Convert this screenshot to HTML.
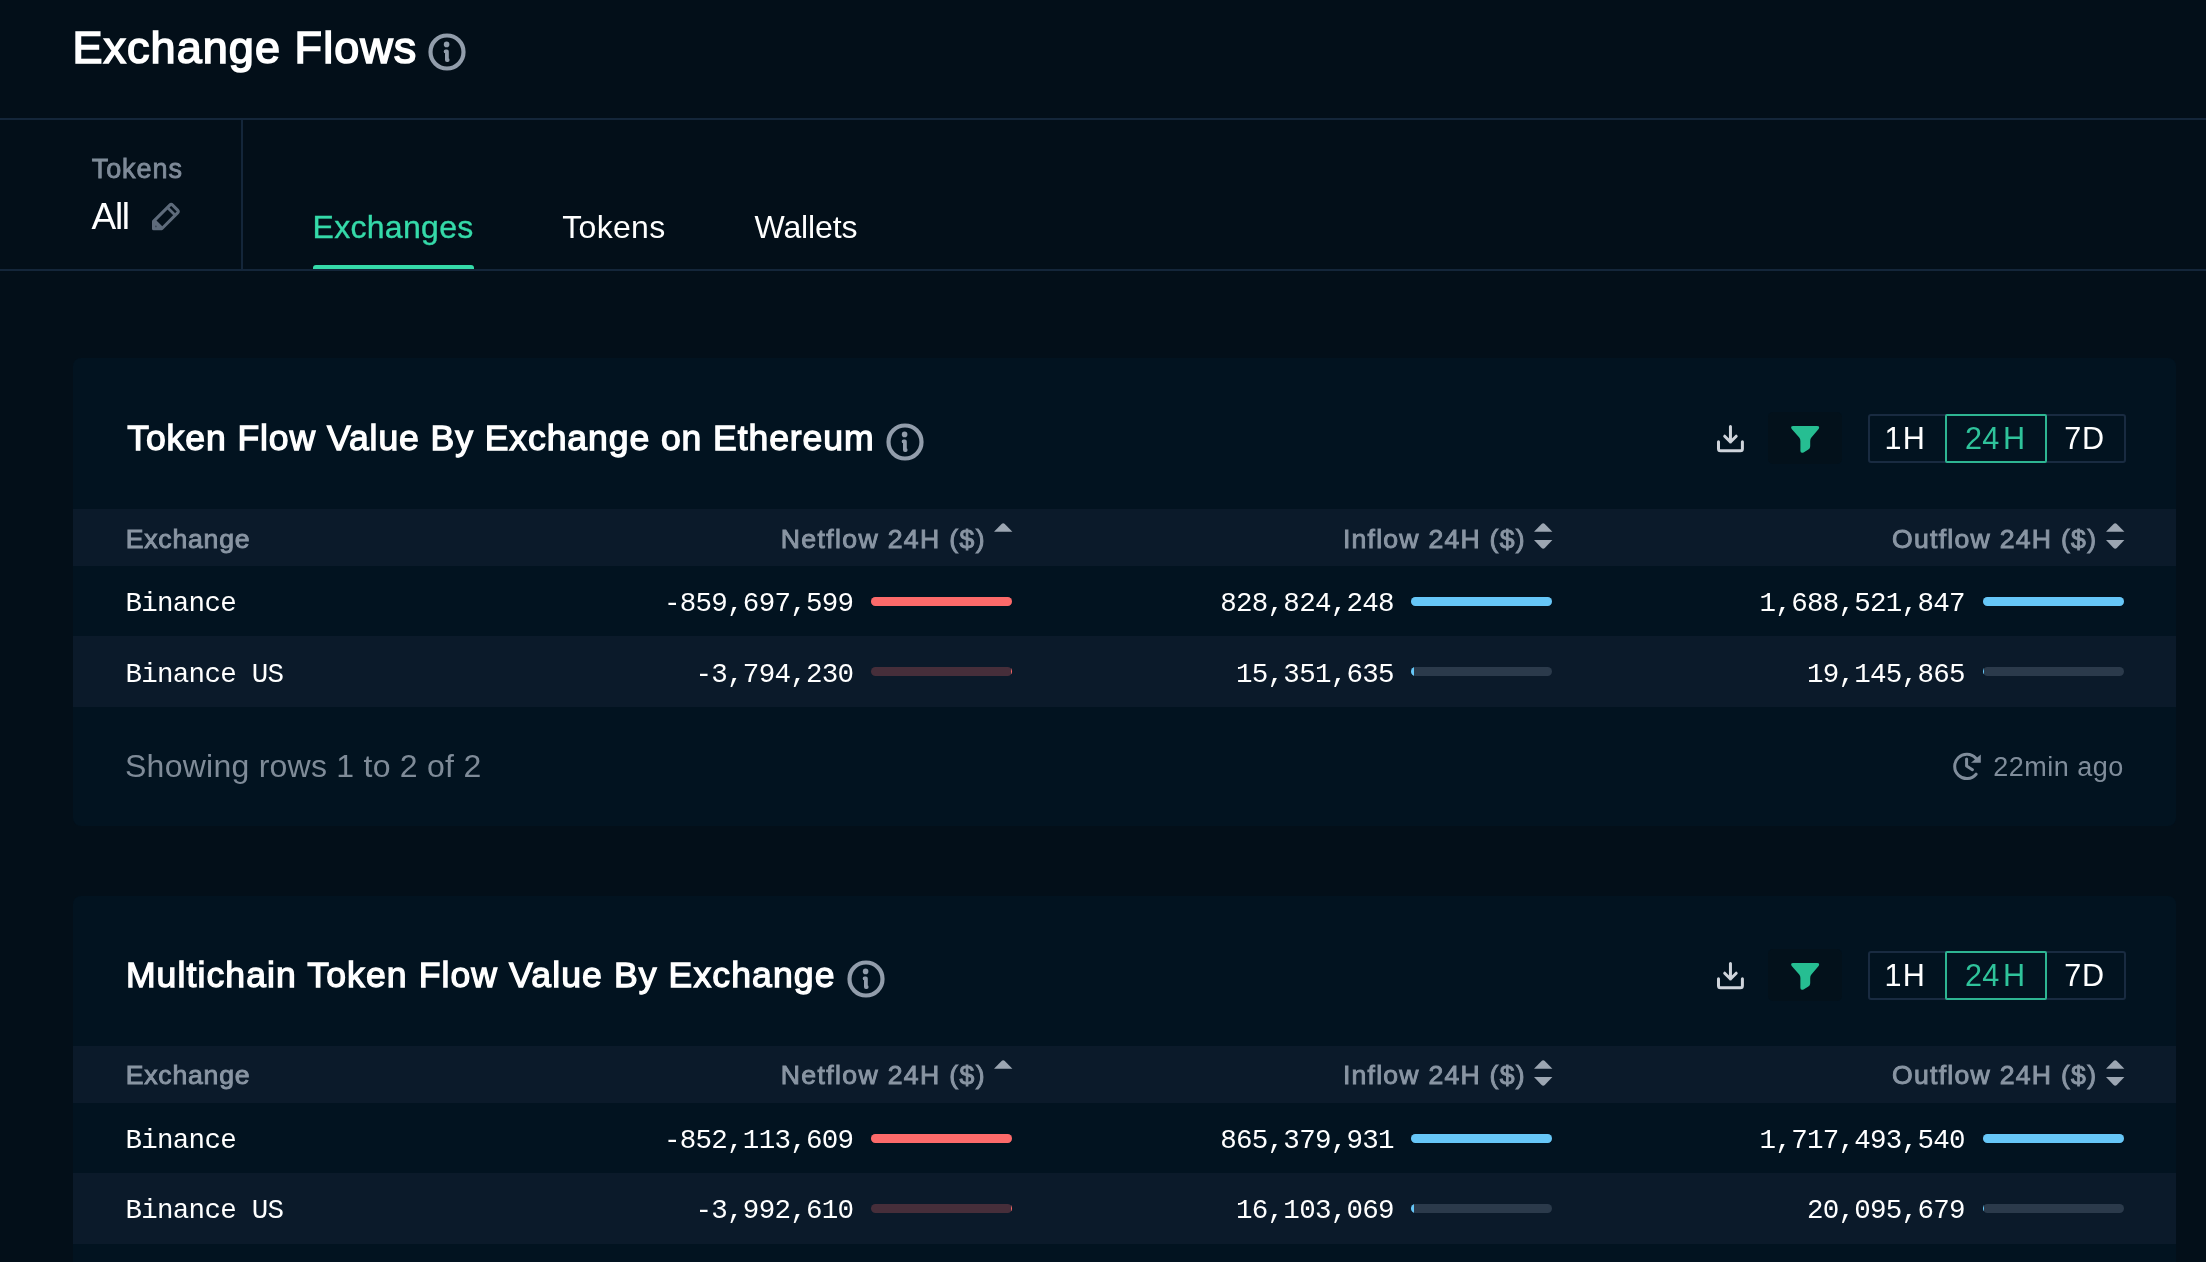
<!DOCTYPE html>
<html lang="en"><head><meta charset="utf-8"><title>Exchange Flows</title>
<style>
*{margin:0;padding:0;box-sizing:border-box}
html,body{width:2206px;height:1262px;overflow:hidden;background:#030f19}
body{position:relative;font-family:"Liberation Sans",sans-serif;color:#fff}
.t{position:absolute;line-height:1;white-space:pre;font-weight:400}
.m{font-family:"Liberation Mono",monospace}
.b{font-weight:400;-webkit-text-stroke:0.036em currentColor}
#root{position:absolute;left:0;top:0;width:2206px;height:1262px;overflow:hidden;will-change:transform;transform:translateZ(0)}
.b2{font-weight:400;-webkit-text-stroke:0.036em currentColor}
.b3{-webkit-text-stroke:0.012em currentColor}
.b4{-webkit-text-stroke:0.03em currentColor}
.abs{position:absolute}
.hl{position:absolute;background:#14263a}
.card{position:absolute;left:73px;width:2103px;background:#021320;border-radius:8px}
.band{position:absolute;left:73px;width:2103px;background:#0b1a2a}
.bar{position:absolute;height:9px;border-radius:5px;overflow:hidden}
.bar i{position:absolute;left:0;top:0;bottom:0;display:block}
svg{position:absolute;overflow:visible}
</style></head>
<body><div id="root">
<header class="page-head">
<h1 class="t b" style="top:22px;font-size:45px;line-height:51px;left:72.40px;letter-spacing:1.060px;">Exchange Flows</h1>
<svg style="left:427.3px;top:31.9px" width="40" height="40" viewBox="-20 -20 40 40"><circle r="16.5" fill="none" stroke="#929dab" stroke-width="4.2"/><circle cx="-0.4" cy="-7.6" r="2.8" fill="#929dab"/><path d="M-1.4 -0.6H-0.1V8H0.7" fill="none" stroke="#929dab" stroke-width="3.8" stroke-linecap="round" stroke-linejoin="round"/></svg>
</header>
<div class="hl" style="left:0;top:118px;width:2206px;height:2px"></div>
<div class="hl" style="left:0;top:269px;width:2206px;height:2px"></div>
<div class="hl" style="left:241px;top:120px;width:2px;height:149px"></div>
<div class="t b4" style="top:154px;font-size:27px;line-height:30px;left:91.70px;letter-spacing:0.950px;color:#7f8b99;">Tokens</div>
<div class="t" style="top:196px;font-size:37px;line-height:41px;left:91.50px;letter-spacing:-1.300px;">All</div>
<svg style="left:152px;top:201.5px" width="30" height="29" viewBox="0 0 30 29"><path d="M17.8 3.12Q19.2 1.72 20.6 3.12L25.58 8.1Q26.98 9.5 25.58 10.9L9.78 26.7H1.5V19.42Z" fill="none" stroke="#5e6b7b" stroke-width="3" stroke-linejoin="round"/><path d="M15.46 5.46L23.24 13.24" fill="none" stroke="#5e6b7b" stroke-width="2.8"/><path d="M1.5 19.42L3.46 17.46L11.24 25.24L9.78 26.7H1.5Z" fill="#5e6b7b"/><circle cx="3.9" cy="24.4" r="0.9" fill="#3a4656"/></svg>
<nav>
<div class="t b3" style="top:209px;font-size:32px;line-height:36px;left:312.50px;letter-spacing:0.300px;color:#35daa9;">Exchanges</div>
<div class="t" style="top:209px;font-size:32px;line-height:36px;left:562.30px;letter-spacing:0.300px;">Tokens</div>
<div class="t" style="top:209px;font-size:32px;line-height:36px;left:754.60px;letter-spacing:-0.150px;">Wallets</div>
<div class="abs" style="left:313px;top:265px;width:161px;height:4px;background:#35daa9;border-radius:3px 3px 0 0"></div>
</nav>
<section class="panel"><div class="card" style="top:358px;height:468px"></div>
<header class="panel-head">
<h2 class="t b" style="top:418px;font-size:35.6px;line-height:40px;left:127.20px;letter-spacing:0.900px;">Token Flow Value By Exchange on Ethereum</h2>
<svg style="left:885.3px;top:421.9px" width="40" height="40" viewBox="-20 -20 40 40"><circle r="16.5" fill="none" stroke="#929dab" stroke-width="4.2"/><circle cx="-0.4" cy="-7.6" r="2.8" fill="#929dab"/><path d="M-1.4 -0.6H-0.1V8H0.7" fill="none" stroke="#929dab" stroke-width="3.8" stroke-linecap="round" stroke-linejoin="round"/></svg>
<svg style="left:1717px;top:424.9px" width="27" height="28" viewBox="0 0 27 28"><g fill="none" stroke="#cfd4db" stroke-width="3" stroke-linecap="round" stroke-linejoin="round"><path d="M13.45 1.5V17M7.7 11.2L13.45 17L19.2 11.2"/><path d="M1.5 16.8V23.7Q1.5 25.7 3.5 25.7H23.4Q25.4 25.7 25.4 23.7V16.8"/></g></svg>
<div class="abs" style="left:1768px;top:412px;width:74px;height:52px;background:#03111b;border-radius:5px"></div>
<svg style="left:1791px;top:426px" width="29" height="28" viewBox="0 0 29 28"><path d="M2.2 0H26.1Q29.3 0.2 27.6 2.9L20.4 11.6Q19.2 13.1 19.2 15V20.2Q19.2 22.4 17.4 23.6L12.6 26.4Q9.4 27.8 9.4 24.8V15Q9.4 13.1 8.2 11.6L0.7 2.9Q-1 0.2 2.2 0Z" fill="#26be92"/></svg>
<div class="abs" style="left:1868px;top:414px;width:258px;height:49px;border:2px solid #192b41;border-radius:3px"></div>
<div class="abs" style="left:1945px;top:414px;width:102px;height:49px;border:2px solid #2eb592;border-radius:2px"></div>
<div class="t" style="top:421px;font-size:30.6px;line-height:34px;left:1884.60px;"><span style="letter-spacing:1.1px">1</span>H</div>
<div class="t" style="top:421px;font-size:30.6px;line-height:34px;left:1965.10px;color:#2fc39b;"><span style="letter-spacing:0.2px">2</span><span style="letter-spacing:3.6px">4</span>H</div>
<div class="t" style="top:421px;font-size:30.6px;line-height:34px;left:2064.20px;"><span style="letter-spacing:0.8px">7</span>D</div>
</header>
<div class="table" role="table"><div class="thead" role="row">
<div class="band" style="top:509px;height:57px"></div>
<div class="t b2" style="top:524px;font-size:26.6px;line-height:30px;left:125.70px;letter-spacing:0.790px;color:#8995a3;">Exchange</div>
<div class="t b2" style="top:524px;font-size:26.6px;line-height:30px;right:1220.10px;letter-spacing:1.360px;color:#8995a3;">Netflow 24H ($)</div>
<svg style="left:993.8px;top:522.8px" width="18.4" height="8.8" viewBox="0 0 18.4 8.8"><path d="M0 8.8L7.60 0.9Q9.20 -0.6 10.80 0.9L18.4 8.8Z" fill="#9ca6b2"/></svg>
<div class="t b2" style="top:524px;font-size:26.6px;line-height:30px;right:680.20px;letter-spacing:1.240px;color:#8995a3;">Inflow 24H ($)</div>
<svg style="left:1533.8px;top:522.8px" width="18.4" height="8.8" viewBox="0 0 18.4 8.8"><path d="M0 8.8L7.60 0.9Q9.20 -0.6 10.80 0.9L18.4 8.8Z" fill="#9ca6b2"/></svg>
<svg style="left:1533.8px;top:540px" width="18.4" height="9" viewBox="0 0 18.4 9"><path d="M0 0L7.60 8.10Q9.20 9.60 10.80 8.10L18.4 0Z" fill="#9ca6b2"/></svg>
<div class="t b2" style="top:524px;font-size:26.6px;line-height:30px;right:108.70px;letter-spacing:1.270px;color:#8995a3;">Outflow 24H ($)</div>
<svg style="left:2105.7px;top:522.8px" width="18.4" height="8.8" viewBox="0 0 18.4 8.8"><path d="M0 8.8L7.60 0.9Q9.20 -0.6 10.80 0.9L18.4 8.8Z" fill="#9ca6b2"/></svg>
<svg style="left:2105.7px;top:540px" width="18.4" height="9" viewBox="0 0 18.4 9"><path d="M0 0L7.60 8.10Q9.20 9.60 10.80 8.10L18.4 0Z" fill="#9ca6b2"/></svg>
</div>
<div class="tr" role="row">
<div class="t m" style="top:588px;font-size:27.5px;line-height:31px;left:125.50px;letter-spacing:-0.723px;">Binance</div>
<div class="t m" style="top:588px;font-size:27.5px;line-height:31px;right:1352.68px;letter-spacing:-0.723px;">-859,697,599</div>
<div class="bar" style="left:870.8px;top:597.0px;width:141.4px;background:#462e3a"><i style="left:auto;right:0;width:141.4px;background:#fc6a6a"></i></div>
<div class="t m" style="top:588px;font-size:27.5px;line-height:31px;right:812.18px;letter-spacing:-0.723px;">828,824,248</div>
<div class="bar" style="left:1410.8px;top:597.0px;width:141.4px;background:#2b3a4b"><i style="width:141.4px;background:#66c7f8"></i></div>
<div class="t m" style="top:588px;font-size:27.5px;line-height:31px;right:241.28px;letter-spacing:-0.723px;">1,688,521,847</div>
<div class="bar" style="left:1982.8px;top:597.0px;width:141.4px;background:#2b3a4b"><i style="width:141.4px;background:#66c7f8"></i></div>
</div>
<div class="tr" role="row">
<div class="band" style="top:636px;height:71px"></div>
<div class="t m" style="top:659px;font-size:27.5px;line-height:31px;left:125.50px;letter-spacing:-0.723px;">Binance US</div>
<div class="t m" style="top:659px;font-size:27.5px;line-height:31px;right:1352.68px;letter-spacing:-0.723px;">-3,794,230</div>
<div class="bar" style="left:870.8px;top:667.1px;width:141.4px;background:#462e3a"><i style="left:auto;right:0;width:1.7px;background:#fc6a6a"></i></div>
<div class="t m" style="top:659px;font-size:27.5px;line-height:31px;right:812.18px;letter-spacing:-0.723px;">15,351,635</div>
<div class="bar" style="left:1410.8px;top:667.1px;width:141.4px;background:#2b3a4b"><i style="width:3.4px;background:#66c7f8"></i></div>
<div class="t m" style="top:659px;font-size:27.5px;line-height:31px;right:241.28px;letter-spacing:-0.723px;">19,145,865</div>
<div class="bar" style="left:1982.8px;top:667.1px;width:141.4px;background:#2b3a4b"><i style="width:1.7px;background:#66c7f8"></i></div>
</div>
</div>
<footer class="panel-foot">
<div class="t" style="top:748px;font-size:32px;line-height:36px;left:125.00px;letter-spacing:0.250px;color:#7f8b98;">Showing rows 1 to 2 of 2</div>
<svg style="left:1951px;top:751px" width="32" height="30" viewBox="0 0 32 30"><g fill="none" stroke="#808d9b" stroke-width="3" stroke-linecap="round" stroke-linejoin="round"><path d="M24.79 7.3A12.1 12.1 0 1 0 25.07 23.18"/><path d="M15.6 7.9V15.1L21.4 18.7"/></g><path d="M23.8 10.3H28.4V6.4Z" fill="#808d9b" stroke="#808d9b" stroke-width="2.8" stroke-linejoin="miter"/></svg>
<div class="t" style="top:752px;font-size:27px;line-height:30px;left:1993.20px;letter-spacing:0.500px;color:#808d9b;">22min ago</div>
</footer></section>
<section class="panel"><div class="card" style="top:896px;height:400px"></div>
<header class="panel-head">
<h2 class="t b" style="top:955px;font-size:35.6px;line-height:40px;left:125.90px;letter-spacing:1.090px;">Multichain Token Flow Value By Exchange</h2>
<svg style="left:846.3px;top:958.7px" width="40" height="40" viewBox="-20 -20 40 40"><circle r="16.5" fill="none" stroke="#929dab" stroke-width="4.2"/><circle cx="-0.4" cy="-7.6" r="2.8" fill="#929dab"/><path d="M-1.4 -0.6H-0.1V8H0.7" fill="none" stroke="#929dab" stroke-width="3.8" stroke-linecap="round" stroke-linejoin="round"/></svg>
<svg style="left:1717px;top:961.9px" width="27" height="28" viewBox="0 0 27 28"><g fill="none" stroke="#cfd4db" stroke-width="3" stroke-linecap="round" stroke-linejoin="round"><path d="M13.45 1.5V17M7.7 11.2L13.45 17L19.2 11.2"/><path d="M1.5 16.8V23.7Q1.5 25.7 3.5 25.7H23.4Q25.4 25.7 25.4 23.7V16.8"/></g></svg>
<div class="abs" style="left:1768px;top:949px;width:74px;height:52px;background:#03111b;border-radius:5px"></div>
<svg style="left:1791px;top:963px" width="29" height="28" viewBox="0 0 29 28"><path d="M2.2 0H26.1Q29.3 0.2 27.6 2.9L20.4 11.6Q19.2 13.1 19.2 15V20.2Q19.2 22.4 17.4 23.6L12.6 26.4Q9.4 27.8 9.4 24.8V15Q9.4 13.1 8.2 11.6L0.7 2.9Q-1 0.2 2.2 0Z" fill="#26be92"/></svg>
<div class="abs" style="left:1868px;top:951px;width:258px;height:49px;border:2px solid #192b41;border-radius:3px"></div>
<div class="abs" style="left:1945px;top:951px;width:102px;height:49px;border:2px solid #2eb592;border-radius:2px"></div>
<div class="t" style="top:958px;font-size:30.6px;line-height:34px;left:1884.60px;"><span style="letter-spacing:1.1px">1</span>H</div>
<div class="t" style="top:958px;font-size:30.6px;line-height:34px;left:1965.10px;color:#2fc39b;"><span style="letter-spacing:0.2px">2</span><span style="letter-spacing:3.6px">4</span>H</div>
<div class="t" style="top:958px;font-size:30.6px;line-height:34px;left:2064.20px;"><span style="letter-spacing:0.8px">7</span>D</div>
</header>
<div class="table" role="table"><div class="thead" role="row">
<div class="band" style="top:1046px;height:57px"></div>
<div class="t b2" style="top:1060px;font-size:26.6px;line-height:30px;left:125.70px;letter-spacing:0.790px;color:#8995a3;">Exchange</div>
<div class="t b2" style="top:1060px;font-size:26.6px;line-height:30px;right:1220.10px;letter-spacing:1.360px;color:#8995a3;">Netflow 24H ($)</div>
<svg style="left:993.8px;top:1059.8px" width="18.4" height="8.8" viewBox="0 0 18.4 8.8"><path d="M0 8.8L7.60 0.9Q9.20 -0.6 10.80 0.9L18.4 8.8Z" fill="#9ca6b2"/></svg>
<div class="t b2" style="top:1060px;font-size:26.6px;line-height:30px;right:680.20px;letter-spacing:1.240px;color:#8995a3;">Inflow 24H ($)</div>
<svg style="left:1533.8px;top:1059.8px" width="18.4" height="8.8" viewBox="0 0 18.4 8.8"><path d="M0 8.8L7.60 0.9Q9.20 -0.6 10.80 0.9L18.4 8.8Z" fill="#9ca6b2"/></svg>
<svg style="left:1533.8px;top:1077px" width="18.4" height="9" viewBox="0 0 18.4 9"><path d="M0 0L7.60 8.10Q9.20 9.60 10.80 8.10L18.4 0Z" fill="#9ca6b2"/></svg>
<div class="t b2" style="top:1060px;font-size:26.6px;line-height:30px;right:108.70px;letter-spacing:1.270px;color:#8995a3;">Outflow 24H ($)</div>
<svg style="left:2105.7px;top:1059.8px" width="18.4" height="8.8" viewBox="0 0 18.4 8.8"><path d="M0 8.8L7.60 0.9Q9.20 -0.6 10.80 0.9L18.4 8.8Z" fill="#9ca6b2"/></svg>
<svg style="left:2105.7px;top:1077px" width="18.4" height="9" viewBox="0 0 18.4 9"><path d="M0 0L7.60 8.10Q9.20 9.60 10.80 8.10L18.4 0Z" fill="#9ca6b2"/></svg>
</div>
<div class="tr" role="row">
<div class="t m" style="top:1125px;font-size:27.5px;line-height:31px;left:125.50px;letter-spacing:-0.723px;">Binance</div>
<div class="t m" style="top:1125px;font-size:27.5px;line-height:31px;right:1352.68px;letter-spacing:-0.723px;">-852,113,609</div>
<div class="bar" style="left:870.8px;top:1133.5px;width:141.4px;background:#462e3a"><i style="left:auto;right:0;width:141.4px;background:#fc6a6a"></i></div>
<div class="t m" style="top:1125px;font-size:27.5px;line-height:31px;right:812.18px;letter-spacing:-0.723px;">865,379,931</div>
<div class="bar" style="left:1410.8px;top:1133.5px;width:141.4px;background:#2b3a4b"><i style="width:141.4px;background:#66c7f8"></i></div>
<div class="t m" style="top:1125px;font-size:27.5px;line-height:31px;right:241.28px;letter-spacing:-0.723px;">1,717,493,540</div>
<div class="bar" style="left:1982.8px;top:1133.5px;width:141.4px;background:#2b3a4b"><i style="width:141.4px;background:#66c7f8"></i></div>
</div>
<div class="tr" role="row">
<div class="band" style="top:1172.5px;height:71.0px"></div>
<div class="t m" style="top:1195px;font-size:27.5px;line-height:31px;left:125.50px;letter-spacing:-0.723px;">Binance US</div>
<div class="t m" style="top:1195px;font-size:27.5px;line-height:31px;right:1352.68px;letter-spacing:-0.723px;">-3,992,610</div>
<div class="bar" style="left:870.8px;top:1204.0px;width:141.4px;background:#462e3a"><i style="left:auto;right:0;width:1.7px;background:#fc6a6a"></i></div>
<div class="t m" style="top:1195px;font-size:27.5px;line-height:31px;right:812.18px;letter-spacing:-0.723px;">16,103,069</div>
<div class="bar" style="left:1410.8px;top:1204.0px;width:141.4px;background:#2b3a4b"><i style="width:3.4px;background:#66c7f8"></i></div>
<div class="t m" style="top:1195px;font-size:27.5px;line-height:31px;right:241.28px;letter-spacing:-0.723px;">20,095,679</div>
<div class="bar" style="left:1982.8px;top:1204.0px;width:141.4px;background:#2b3a4b"><i style="width:1.7px;background:#66c7f8"></i></div>
</div>
</div>
<footer class="panel-foot">
<div class="t" style="top:1285px;font-size:32px;line-height:36px;left:125.00px;letter-spacing:0.250px;color:#7f8b98;">Showing rows 1 to 2 of 2</div>
<svg style="left:1951px;top:1288px" width="32" height="30" viewBox="0 0 32 30"><g fill="none" stroke="#808d9b" stroke-width="3" stroke-linecap="round" stroke-linejoin="round"><path d="M24.79 7.3A12.1 12.1 0 1 0 25.07 23.18"/><path d="M15.6 7.9V15.1L21.4 18.7"/></g><path d="M23.8 10.3H28.4V6.4Z" fill="#808d9b" stroke="#808d9b" stroke-width="2.8" stroke-linejoin="miter"/></svg>
<div class="t" style="top:1289px;font-size:27px;line-height:30px;left:1993.20px;letter-spacing:0.500px;color:#808d9b;">22min ago</div>
</footer></section>
</div></body></html>
